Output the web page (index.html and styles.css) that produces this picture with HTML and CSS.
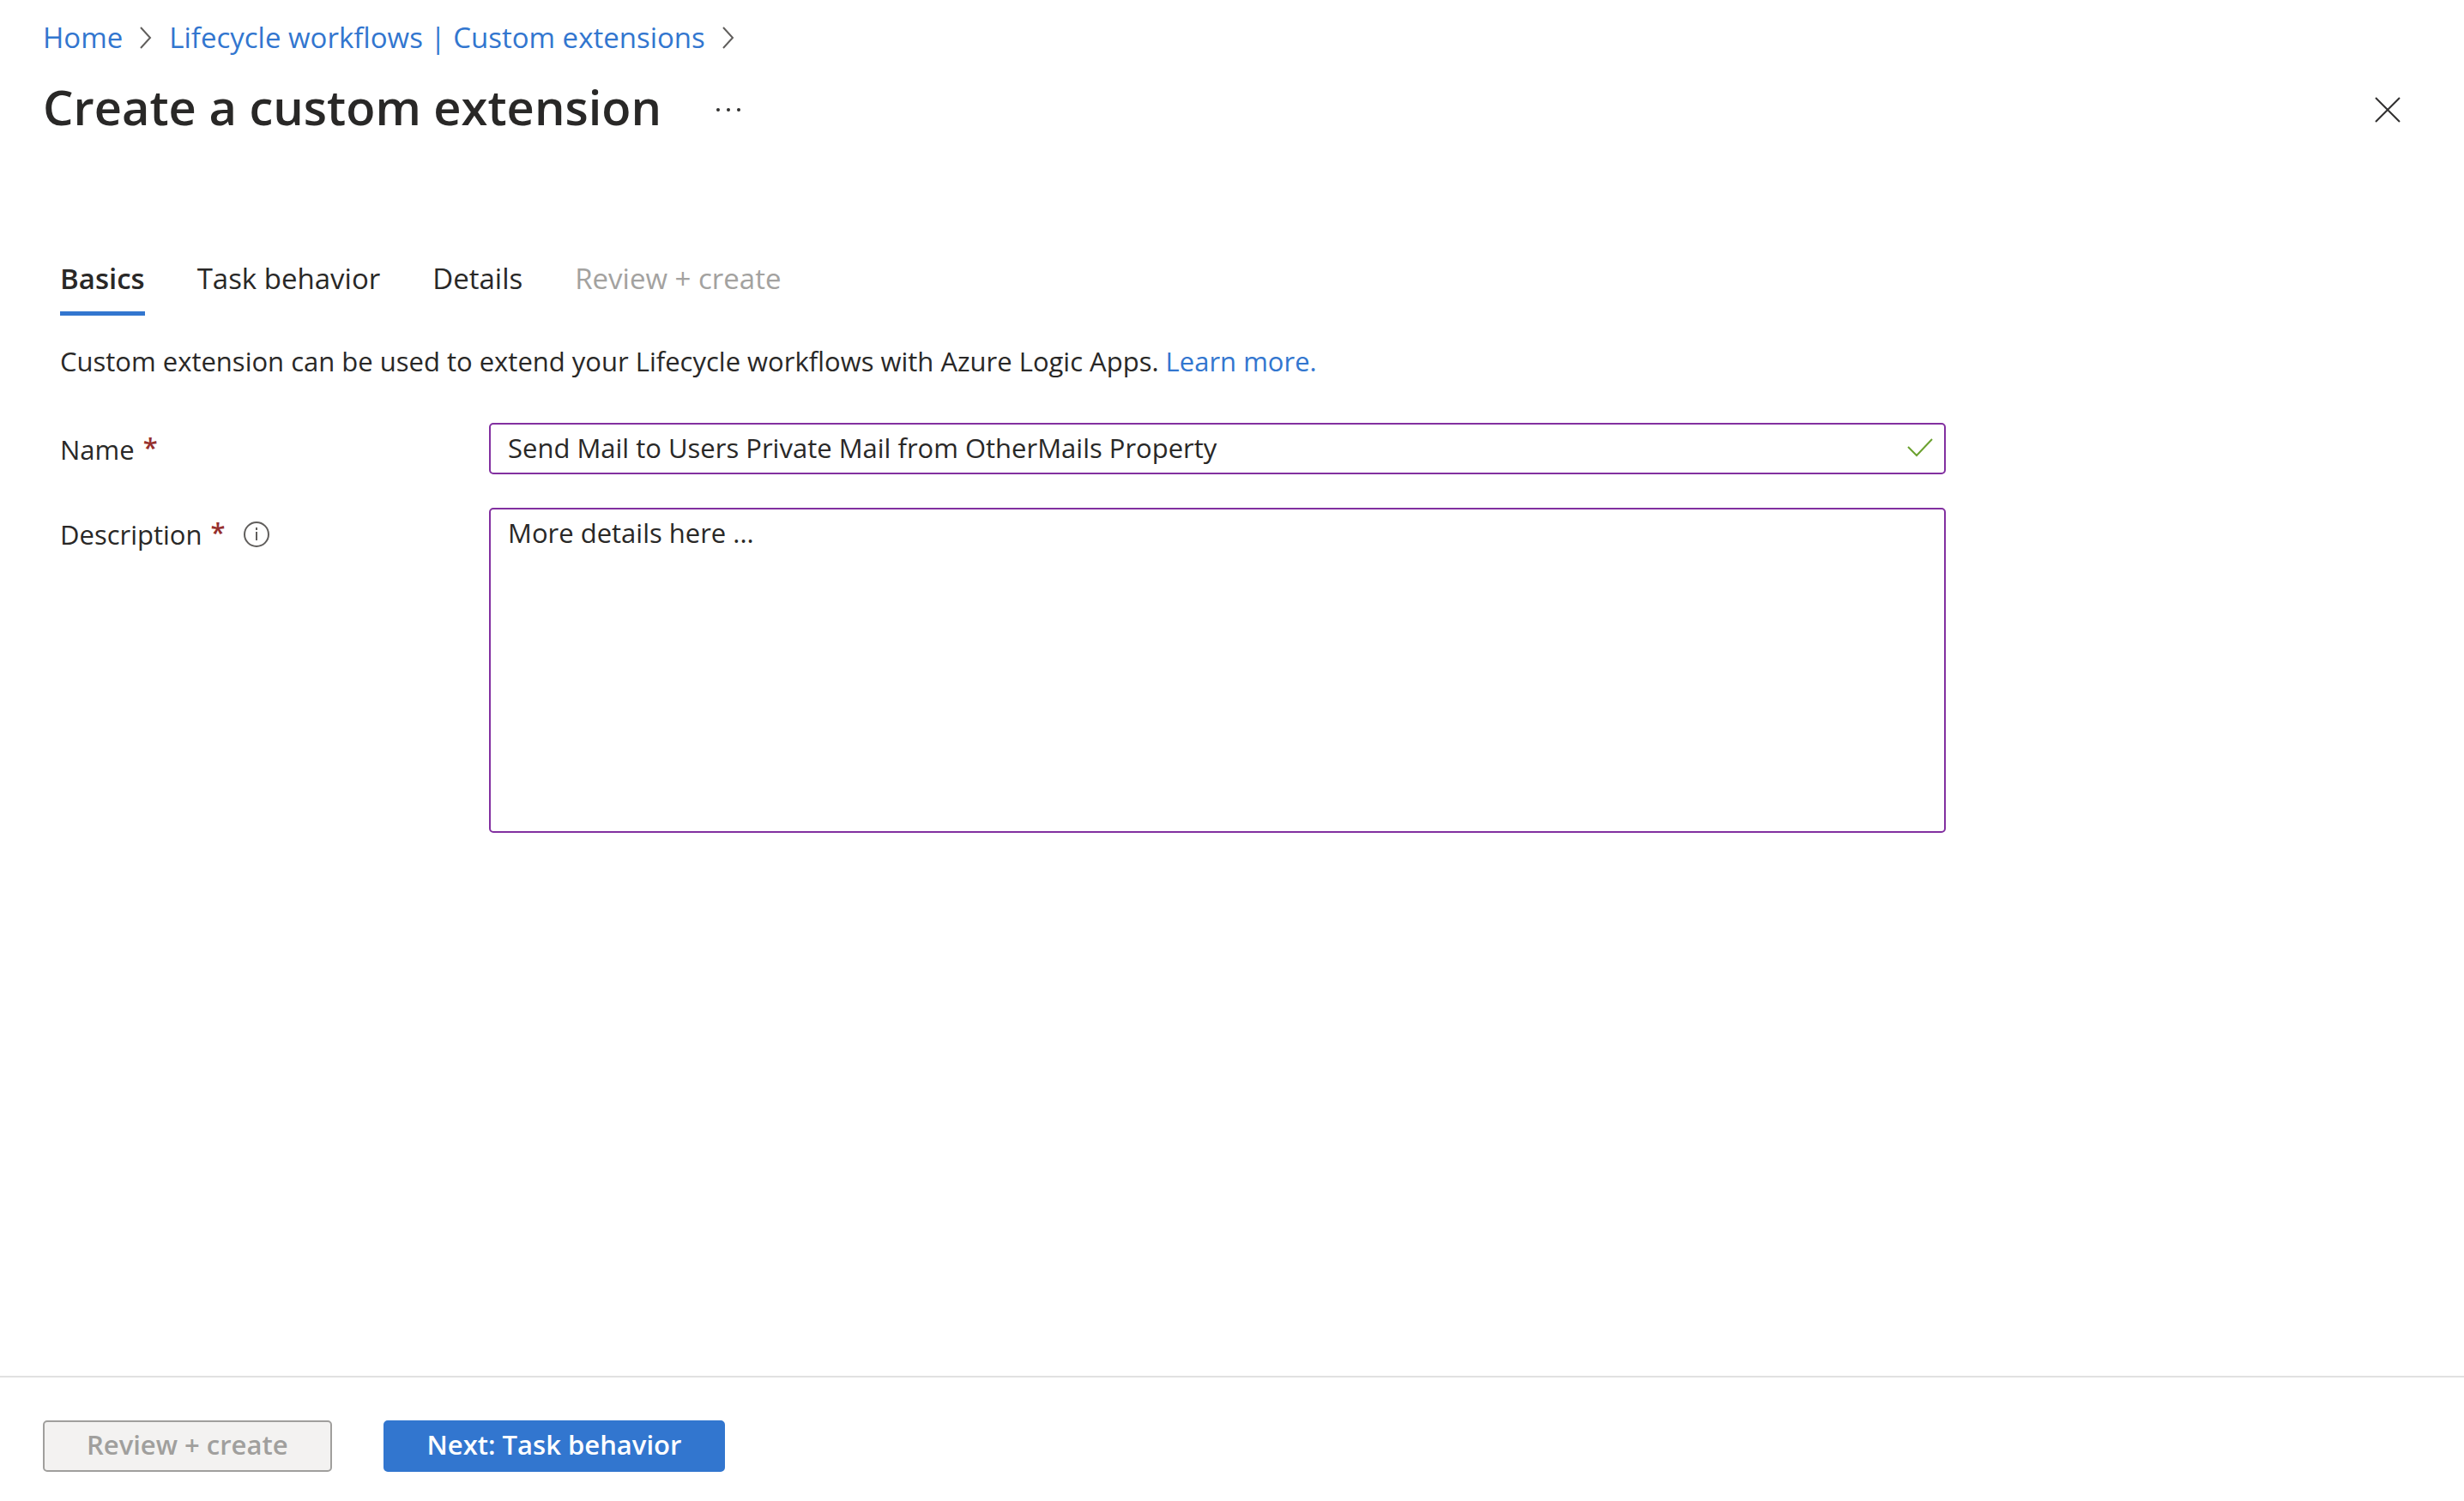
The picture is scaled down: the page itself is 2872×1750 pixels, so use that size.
FILE: index.html
```html
<!DOCTYPE html>
<html lang="en">
<head>
<meta charset="utf-8">
<meta name="viewport" content="width=device-width, initial-scale=1">
<title>Create a custom extension</title>
<link rel="stylesheet" href="styles.css">
</head>
<body>
<div class="page">
  <header class="header">
    <nav class="breadcrumb" aria-label="Breadcrumb">
      <a href="#">Home</a>
      <svg class="chevron" viewBox="0 0 14 26" aria-hidden="true"><path d="M1 1l11 12L1 25"/></svg>
      <a href="#">Lifecycle workflows | Custom extensions</a>
      <svg class="chevron" viewBox="0 0 14 26" aria-hidden="true"><path d="M1 1l11 12L1 25"/></svg>
    </nav>
    <div class="title-row">
      <h1 class="title">Create a custom extension</h1>
      <button class="icon-button" type="button" aria-label="More options">
        <svg class="dots" viewBox="0 0 28 4" aria-hidden="true"><circle cx="2" cy="2" r="2"/><circle cx="14" cy="2" r="2"/><circle cx="26" cy="2" r="2"/></svg>
      </button>
      <button class="icon-button close" type="button" aria-label="Close">
        <svg class="cross" viewBox="0 0 30 30" aria-hidden="true"><path d="M1 1l28 28M29 1L1 29"/></svg>
      </button>
    </div>
  </header>

  <main class="content">
    <div class="tabs" role="tablist">
      <button class="tab tab-active" type="button" role="tab" aria-selected="true">Basics</button>
      <button class="tab" type="button" role="tab">Task behavior</button>
      <button class="tab" type="button" role="tab">Details</button>
      <button class="tab" type="button" role="tab" disabled>Review + create</button>
    </div>
    <p class="intro">Custom extension can be used to extend your Lifecycle workflows with Azure Logic Apps. <a href="#">Learn more.</a></p>
    <form class="form" id="extension-form">
      <div class="field">
        <div class="label-cell">
          <label for="name">Name</label><span class="required">*</span>
        </div>
        <div class="control">
          <input class="box" id="name" type="text" value="Send Mail to Users Private Mail from OtherMails Property">
          <svg class="check" viewBox="0 0 32 24" aria-hidden="true"><path d="M2 11l10 10L30 2"/></svg>
        </div>
      </div>
      <div class="field">
        <div class="label-cell">
          <label for="description">Description</label><span class="required">*</span>
          <svg class="info" viewBox="0 0 32 32" role="img" aria-label="Info"><circle cx="16" cy="16" r="14"/><path d="M16 13v10M16 8v3"/></svg>
        </div>
        <div class="control">
          <textarea class="box area" id="description">More details here ...</textarea>
        </div>
      </div>
    </form>
  </main>

  <footer class="footer">
    <button class="button" type="button" disabled>Review + create</button>
    <button class="button primary" type="submit" form="extension-form">Next: Task behavior</button>
  </footer>
</div>
</body>
</html>
```
FILE: styles.css
```css
* {
  box-sizing: border-box;
}

body {
  margin: 0;
  background: #fff;
  color: #292827;
  font-family: "Open Sans", "Noto Sans", sans-serif;
  font-size: 31px;
  line-height: 40px;
}

button,
input,
textarea {
  margin: 0;
  font: inherit;
  color: inherit;
}

button {
  padding: 0;
  border: 0;
  background: none;
}

a {
  color: #3276cf;
  text-decoration: none;
}

svg {
  display: block;
  flex: none;
  fill: none;
}

.page {
  display: flex;
  flex-direction: column;
  min-height: 100vh;
}

.header {
  padding: 24px 74px 0 50px;
}

.breadcrumb {
  display: flex;
  align-items: center;
  gap: 20px;
  font-size: 33px;
}

.chevron {
  width: 14px;
  height: 26px;
  stroke: #605e5c;
  stroke-width: 2;
}

.title-row {
  display: flex;
  align-items: center;
  gap: 64px;
  margin-top: 18px;
}

.title {
  margin: 0;
  font-size: 56px;
  font-weight: 600;
  line-height: 84px;
}

.icon-button {
  display: flex;
  align-items: center;
  justify-content: center;
  height: 40px;
  padding-top: 8px;
}

.close {
  margin-left: auto;
}

.dots {
  width: 28px;
  height: 4px;
  fill: #323130;
}

.cross {
  width: 30px;
  height: 30px;
  stroke: #323130;
  stroke-width: 2;
}

.content {
  flex: 1;
  padding: 138px 70px 40px;
}

.tabs {
  display: flex;
  gap: 61px;
  font-size: 33px;
}

.tab {
  height: 64px;
  padding-bottom: 17px;
  border-bottom: 5px solid transparent;
}

.tab:disabled {
  color: #a3a2a0;
}

.tab-active {
  border-color: #3276cf;
  font-weight: 600;
}

.intro {
  margin: 33px 0 52px;
}

.form {
  display: flex;
  flex-direction: column;
  gap: 39px;
  max-width: 2198px;
}

.field {
  display: grid;
  grid-template-columns: 500px 1fr;
}

.label-cell {
  display: flex;
  align-items: center;
  gap: 10px;
  height: 40px;
  margin-top: 11px;
}

.required {
  align-self: flex-start;
  color: #962f2d;
  font-weight: 600;
  line-height: 34px;
}

.info {
  width: 32px;
  height: 32px;
  margin-left: 10px;
  stroke: #605e5c;
  stroke-width: 2;
}

.control {
  position: relative;
}

.box {
  display: block;
  width: 100%;
  height: 60px;
  padding: 7px 60px 9px 20px;
  border: 2px solid #8230a0;
  border-radius: 5px;
  background: #fff;
}

.area {
  height: 379px;
  resize: none;
}

.check {
  position: absolute;
  top: 17px;
  right: 14px;
  width: 32px;
  height: 24px;
  stroke: #6ba12f;
  stroke-width: 2;
}

.footer {
  display: flex;
  gap: 60px;
  padding: 50px 50px 34px;
  border-top: 2px solid #e1e1e1;
}

.button {
  height: 60px;
  padding: 0 49px 4px;
  border: 2px solid #3276cf;
  border-radius: 5px;
  font-weight: 600;
}

.button:disabled {
  border-color: #a09f9d;
  background: #f3f2f1;
  color: #a09f9d;
}

.primary {
  background: #3276cf;
  color: #fff;
}
```
